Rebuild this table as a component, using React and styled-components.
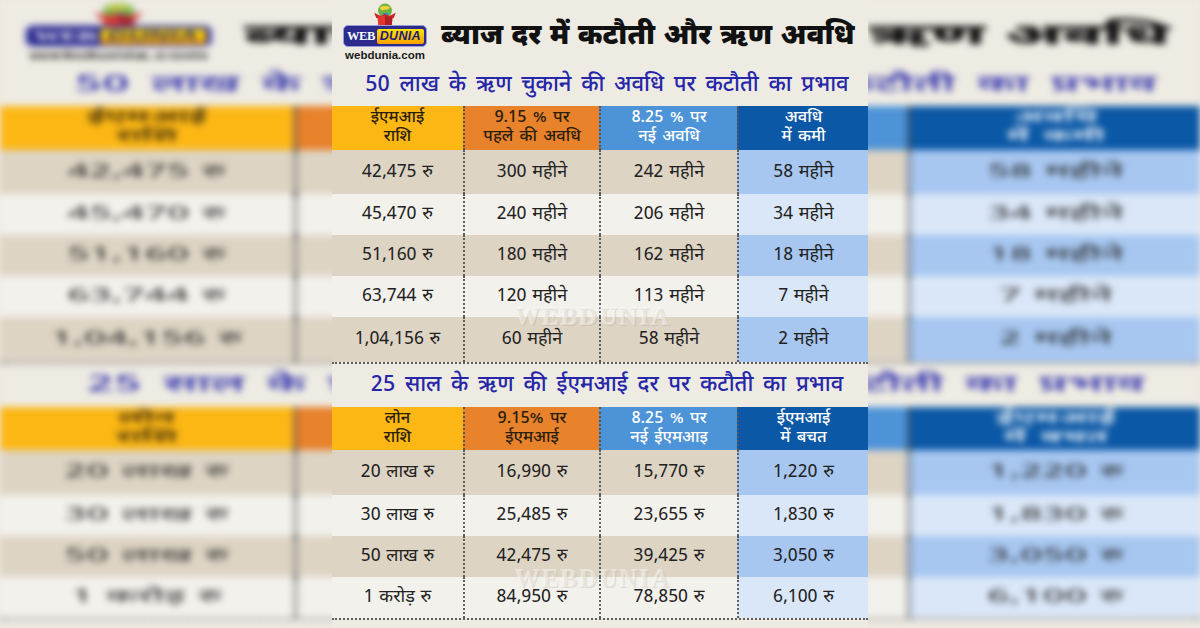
import React from 'react'
import styled, { createGlobalStyle } from 'styled-components'

const HINDI = `"Noto Sans Devanagari", "Lohit Devanagari", "Noto Sans", "Open Sans", sans-serif`;

const GlobalStyle = createGlobalStyle`
    html, body {
        margin: 0;
        padding: 0;
        background: #ece8df;
    }
    body {
        font-family: ${HINDI};
    }
`;

const Stage = styled.div`
    display: grid;
    width: 1200px;
    height: 628px;
    overflow: hidden;
`;

const Backdrop = styled.div`
    grid-area: 1 / 1;
    width: 1200px;
    height: 628px;
    overflow: hidden;
    filter: blur(3.5px);
`;

const Stretch = styled.div`
    width: 536px;
    transform: scaleX(2.2388);
    transform-origin: left top;
`;

const Front = styled.div`
    grid-area: 1 / 1;
    justify-self: center;
    position: relative;
    z-index: 1;
    width: 536px;
`;

const Sheet = styled.div`
    display: flex;
    flex-direction: column;
    width: 536px;
    height: 628px;
    background: #eeebe3;
    overflow: hidden;
`;

const Masthead = styled.div`
    display: flex;
    align-items: center;
    height: 64px;
    padding-left: 9px;
    gap: 12px;
`;

const LogoWrap = styled.div`
    display: flex;
    flex-direction: column;
    align-items: center;
    flex-shrink: 0;
    width: 88px;
    padding-top: 1px;
`;

const LogoBadge = styled.div`
    display: flex;
    align-items: center;
    gap: 2px;
    height: 20px;
    padding: 0 2px 0 3px;
    margin-top: -4px;
    background: #2b2b8e;
    border: 1px solid #9a9ad8;
    border-radius: 5px;
`;

const LogoWeb = styled.span`
    font-family: "Liberation Serif", serif;
    font-weight: 700;
    font-size: 12.5px;
    color: #ffffff;
    letter-spacing: -0.5px;
`;

const LogoDunia = styled.span`
    font-family: "Liberation Sans", sans-serif;
    font-weight: 900;
    font-style: italic;
    font-size: 12.5px;
    line-height: 15px;
    padding: 0 3px;
    color: #1c1c7a;
    background: linear-gradient(180deg, #ffe600 0%, #f7a000 100%);
    border-radius: 2px;
    letter-spacing: 0.3px;
`;

const LogoSite = styled.span`
    font-family: "Liberation Sans", sans-serif;
    font-weight: 700;
    font-size: 11.5px;
    line-height: 14px;
    color: #1a1a1a;
    margin-top: 1px;
`;

const Title = styled.h1`
    margin: 0;
    font-family: ${HINDI};
    font-size: 28.5px;
    font-weight: 900;
    color: #111111;
    word-spacing: 1px;
    white-space: nowrap;
    padding-top: 9px;
`;

const Subtitle = styled.h2`
    margin: 0;
    height: ${({ $h }) => $h}px;
    display: flex;
    align-items: center;
    justify-content: center;
    padding-left: 14px;
    font-family: ${HINDI};
    font-size: 22px;
    font-weight: 500;
    color: #2626a8;
    word-spacing: 4px;
    white-space: nowrap;
`;

const Table = styled.div`
    position: relative;
    display: grid;
    grid-template-columns: 131px 136px 138px 131px;
    border-bottom: 2px dotted #5e5e5e;
`;

const HeadCell = styled.div`
    display: flex;
    flex-direction: column;
    align-items: center;
    justify-content: center;
    height: ${({ $h }) => $h}px;
    background: ${({ $bg }) => $bg};
    color: ${({ $fg }) => $fg};
    font-size: 16.5px;
    line-height: 19px;
    font-weight: 500;
    word-spacing: 2px;
    ${({ $first }) => !$first && `border-left: 2px dotted #555555;`}
    box-sizing: border-box;
`;

const Cell = styled.div`
    display: flex;
    align-items: center;
    justify-content: center;
    height: ${({ $h }) => $h}px;
    background: ${({ $bg }) => $bg};
    color: #222222;
    font-size: 18px;
    font-weight: 400;
    word-spacing: 1px;
    ${({ $first }) => !$first && `border-left: 2px dotted #5e5e5e;`}
    box-sizing: border-box;
    white-space: nowrap;
`;

const Watermark = styled.span`
    position: absolute;
    left: 183px;
    top: ${({ $top }) => $top}px;
    font-family: "Liberation Serif", serif;
    font-weight: 700;
    font-size: 25px;
    letter-spacing: 2px;
    color: rgba(240, 236, 228, 0.55);
    text-shadow: 1px 1px 0 rgba(120, 110, 90, 0.18), -1px -1px 0 rgba(255, 255, 255, 0.4);
    pointer-events: none;
`;

const HEAD_COLORS = [
    { bg: '#fcb714', fg: '#2a1e0c' },
    { bg: '#e8822b', fg: '#2a1e0c' },
    { bg: '#4d93d8', fg: '#ffffff' },
    { bg: '#0b58a6', fg: '#ffffff' },
];

const rowBg = (row, col) => {
    const dark = row % 2 === 0;
    if (col === 3) return dark ? '#a7c7f1' : '#dae7f8';
    return dark ? '#ddd4c4' : '#f3f1ec';
};

const BoxIcon = () => (
    <svg width="28" height="26" viewBox="0 0 26 24">
        <circle cx="13" cy="7" r="6.5" fill="#6cb33f" />
        <path d="M8 4 Q13 1 18 4 Q15 7 13 6 Q10 8 8 4 Z" fill="#f6d23a" />
        <path d="M10 10 Q13 8 17 10 L16 12 Z" fill="#3d8fd1" />
        <path d="M3 9 L9 12 L13 10 L17 12 L23 9 L21 14 L13 12 L5 14 Z" fill="#c8262b" />
        <path d="M6 13 L13 12 L20 13 L19 23 L7 23 Z" fill="#e2352d" />
        <path d="M13 12 L20 13 L19 23 L13 23 Z" fill="#b01f24" />
    </svg>
);

const Logo = () => (
    <LogoWrap>
        <BoxIcon />
        <LogoBadge>
            <LogoWeb>WEB</LogoWeb>
            <LogoDunia>DUNIA</LogoDunia>
        </LogoBadge>
        <LogoSite>webdunia.com</LogoSite>
    </LogoWrap>
);

const DataTable = ({ head, headH, rows, heights, markTop }) => (
    <Table>
        {head.map((lines, c) => (
            <HeadCell key={c} $h={headH} $bg={HEAD_COLORS[c].bg} $fg={HEAD_COLORS[c].fg} $first={c === 0}>
                {lines.map((l) => <span key={l}>{l}</span>)}
            </HeadCell>
        ))}
        {rows.map((row, r) =>
            row.map((val, c) => (
                <Cell key={`${r}-${c}`} $h={heights[r]} $bg={rowBg(r, c)} $first={c === 0}>
                    {val}
                </Cell>
            ))
        )}
        <Watermark $top={markTop}>WEBDUNIA</Watermark>
    </Table>
);

const tenure = {
    head: [['ईएमआई', 'राशि'], ['9.15 % पर', 'पहले की अवधि'], ['8.25 % पर', 'नई अवधि'], ['अवधि', 'में कमी']],
    rows: [
        ['42,475 रु', '300 महीने', '242 महीने', '58 महीने'],
        ['45,470 रु', '240 महीने', '206 महीने', '34 महीने'],
        ['51,160 रु', '180 महीने', '162 महीने', '18 महीने'],
        ['63,744 रु', '120 महीने', '113 महीने', '7 महीने'],
        ['1,04,156 रु', '60 महीने', '58 महीने', '2 महीने'],
    ],
    heights: [44, 41, 41, 41, 45],
};

const emi = {
    head: [['लोन', 'राशि'], ['9.15% पर', 'ईएमआई'], ['8.25 % पर', 'नई ईएमआइ'], ['ईएमआई', 'में बचत']],
    rows: [
        ['20 लाख रु', '16,990 रु', '15,770 रु', '1,220 रु'],
        ['30 लाख रु', '25,485 रु', '23,655 रु', '1,830 रु'],
        ['50 लाख रु', '42,475 रु', '39,425 रु', '3,050 रु'],
        ['1 करोड़ रु', '84,950 रु', '78,850 रु', '6,100 रु'],
    ],
    heights: [45, 41, 41, 41],
};

const Poster = () => (
    <Sheet>
        <Masthead>
            <Logo />
            <Title>ब्याज दर में कटौती और ऋण अवधि</Title>
        </Masthead>
        <Subtitle $h={42}>50 लाख के ऋण चुकाने की अवधि पर कटौती का प्रभाव</Subtitle>
        <DataTable head={tenure.head} headH={44} rows={tenure.rows} heights={tenure.heights} markTop={197} />
        <Subtitle $h={43}>25 साल के ऋण की ईएमआई दर पर कटौती का प्रभाव</Subtitle>
        <DataTable head={emi.head} headH={43} rows={emi.rows} heights={emi.heights} markTop={158} />
    </Sheet>
);

const App = () => (
    <>
        <GlobalStyle />
        <Stage>
            <Backdrop>
                <Stretch>
                    <Poster />
                </Stretch>
            </Backdrop>
            <Front>
                <Poster />
            </Front>
        </Stage>
    </>
);

export default App
